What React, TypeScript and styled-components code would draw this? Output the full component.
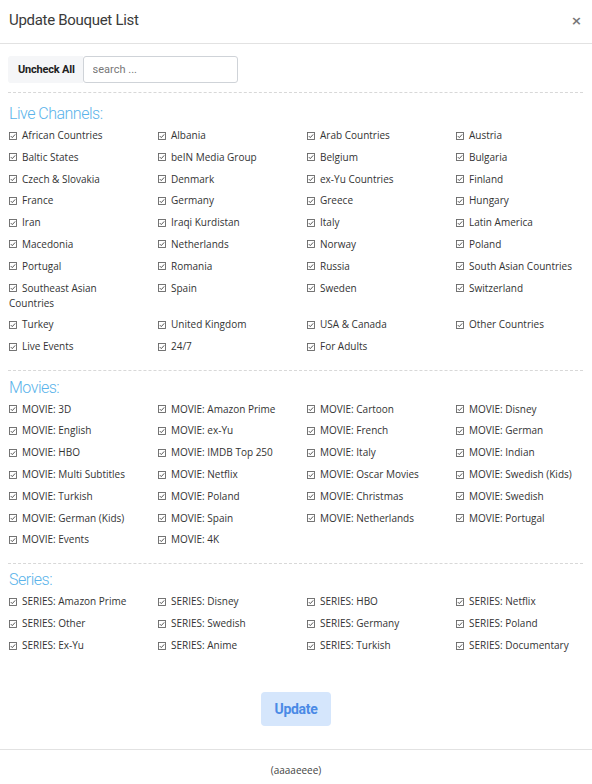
import React from "react";
import styled, { createGlobalStyle } from "styled-components";

const Global = createGlobalStyle`
  html, body { margin: 0; padding: 0; background: #fff; }
  body { font-family: "Open Sans", "Noto Sans", sans-serif; color: #333; overflow: hidden; }
  * { box-sizing: border-box; }
`;

const Modal = styled.div`
  width: 592px;
  min-height: 784px;
  background: #fff;
  overflow: hidden;
`;

const Header = styled.div`
  height: 44px;
  border-bottom: 1px solid #e2e2e2;
  display: flex;
  align-items: center;
  justify-content: space-between;
  padding: 0 10px 3px 9px;
`;

const Title = styled.h4`
  margin: 0;
  font-family: Roboto, "Noto Sans", sans-serif;
  font-weight: 400;
  font-size: 15px;
  letter-spacing: -0.3px;
  color: #3a3a3a;
`;

const Close = styled.button`
  border: 0;
  background: none;
  padding: 0;
  font-size: 13px;
  font-weight: 700;
  color: #777;
  line-height: 1;
  font-family: "DejaVu Sans", sans-serif;
  cursor: pointer;
`;

const Body = styled.div`
  padding: 12px 8px 0 8px;
`;

const Toolbar = styled.div`
  display: flex;
  height: 27px;
`;

const UncheckButton = styled.button`
  border: 0;
  background: #f5f6f8;
  padding: 0 8px 0 10px;
  font-family: Roboto, "Noto Sans", sans-serif;
  font-weight: 700;
  font-size: 11px;
  letter-spacing: -0.2px;
  color: #222;
  border-radius: 3px 0 0 3px;
`;

const Search = styled.input`
  width: 155px;
  height: 27px;
  border: 1px solid #cfd3d8;
  border-radius: 3px;
  padding: 0 9px;
  font-family: Roboto, "Noto Sans", sans-serif;
  font-size: 11px;
  color: #333;
  outline: none;
  &::placeholder { color: #777; }
`;

const Divider = styled.div<{ $top: number; $bottom: number }>`
  border-top: 1px dashed #d8d8d8;
  margin: ${(p) => p.$top}px 1px ${(p) => p.$bottom}px 0;
`;

const SectionTitle = styled.h5`
  margin: 0 0 4px 1px;
  font-family: Roboto, "Noto Sans", sans-serif;
  font-weight: 300;
  font-size: 16px;
  line-height: 20px;
  letter-spacing: -0.5px;
  color: #5ab3ea;
`;

const Grid = styled.div`
  display: grid;
  grid-template-columns: repeat(4, 149px);
  row-gap: 6.8px;
`;

const Item = styled.label`
  font-size: 10px;
  line-height: 15px;
  color: #333;
  padding-left: 1px;
  padding-right: 14px;
`;

const Box = styled.svg`
  width: 8px;
  height: 8px;
  margin-right: 5px;
  vertical-align: -0.5px;
`;

const Check = () => (
  <Box viewBox="0 0 8 8">
    <rect x="0.5" y="0.5" width="7" height="7" fill="#fff" stroke="#666" strokeWidth="0.9" />
    <path d="M1.8 4.1 L3.3 5.6 L6.2 2.4" fill="none" stroke="#444" strokeWidth="0.9" />
  </Box>
);

const Actions = styled.div`
  display: flex;
  justify-content: center;
  padding: 39px 0 23px;
`;

const UpdateButton = styled.button`
  height: 34px;
  width: 70px;
  border: 0;
  border-radius: 4px;
  background: #d5e6fc;
  color: #4a8ae6;
  font-family: Roboto, "Noto Sans", sans-serif;
  font-weight: 700;
  font-size: 14px;
  letter-spacing: -0.3px;
`;

const Footer = styled.div`
  border-top: 1px solid #e2e2e2;
  text-align: center;
  font-size: 10px;
  line-height: 14px;
  padding-top: 13px;
  color: #444;
`;

const live = [
  "African Countries", "Albania", "Arab Countries", "Austria",
  "Baltic States", "beIN Media Group", "Belgium", "Bulgaria",
  "Czech & Slovakia", "Denmark", "ex-Yu Countries", "Finland",
  "France", "Germany", "Greece", "Hungary",
  "Iran", "Iraqi Kurdistan", "Italy", "Latin America",
  "Macedonia", "Netherlands", "Norway", "Poland",
  "Portugal", "Romania", "Russia", "South Asian Countries",
  "Southeast Asian Countries", "Spain", "Sweden", "Switzerland",
  "Turkey", "United Kingdom", "USA & Canada", "Other Countries",
  "Live Events", "24/7", "For Adults",
];

const movies = [
  "3D", "Amazon Prime", "Cartoon", "Disney",
  "English", "ex-Yu", "French", "German",
  "HBO", "IMDB Top 250", "Italy", "Indian",
  "Multi Subtitles", "Netflix", "Oscar Movies", "Swedish (Kids)",
  "Turkish", "Poland", "Christmas", "Swedish",
  "German (Kids)", "Spain", "Netherlands", "Portugal",
  "Events", "4K",
].map((m) => "MOVIE: " + m);

const series = [
  "Amazon Prime", "Disney", "HBO", "Netflix",
  "Other", "Swedish", "Germany", "Poland",
  "Ex-Yu", "Anime", "Turkish", "Documentary",
].map((s) => "SERIES: " + s);

const sections = [
  { title: "Live Channels:", items: live, top: 9, bottom: 11 },
  { title: "Movies:", items: movies, top: 15.5, bottom: 7 },
  { title: "Series:", items: series, top: 16, bottom: 6 },
];

export default function App() {
  return (
    <>
      <Global />
      <Modal>
        <Header>
          <Title>Update Bouquet List</Title>
          <Close aria-label="close">×</Close>
        </Header>
        <Body>
          <Toolbar>
            <UncheckButton>Uncheck All</UncheckButton>
            <Search placeholder="search ..." />
          </Toolbar>
          {sections.map((s) => (
            <section key={s.title}>
              <Divider $top={s.top} $bottom={s.bottom} />
              <SectionTitle>{s.title}</SectionTitle>
              <Grid>
                {s.items.map((it) => (
                  <Item key={it}>
                    <Check />
                    {it}
                  </Item>
                ))}
              </Grid>
            </section>
          ))}
          <Actions>
            <UpdateButton>Update</UpdateButton>
          </Actions>
        </Body>
        <Footer>(aaaaeeee)</Footer>
      </Modal>
    </>
  );
}
